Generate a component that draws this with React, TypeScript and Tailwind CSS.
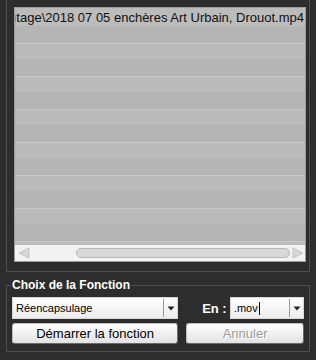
import React from 'react';

const rows = Array.from({ length: 14 });

function Combo({ value, width, caret }: { value: string; width: string; caret?: boolean }) {
  return (
    <div className={`${width} h-[22px] flex items-center bg-gradient-to-b from-white to-[#ececec] border border-[#d8d8d8]`}>
      <div className="flex-1 flex items-center pl-[3px] text-[11px] text-black leading-none">
        {value}
        {caret && <span className="inline-block w-px h-[13px] bg-black ml-[1px]" />}
      </div>
      <div className="h-[18px] border-l border-[#9a9a9a]" />
      <div className="w-[13px] flex justify-center">
        <svg width="8" height="5" viewBox="0 0 8 5">
          <path d="M0.5 0.5 L7.5 0.5 L4 4.5 Z" fill="#222" />
        </svg>
      </div>
    </div>
  );
}

export default function App() {
  return (
    <div className="w-[316px] h-[360px] bg-[#2d2d2d] overflow-hidden" style={{ fontFamily: '"Liberation Sans", Arial, sans-serif' }}>
      {/* Upper group : file list */}
      <div className="ml-[6px] w-[304px] h-[272px] border border-t-0 border-[#4e4e4e] pl-[7px] pt-[7px]">
        <div className="w-[292px] h-[255px] border border-[#9c9c9c] bg-[#bababa] flex flex-col overflow-hidden">
          <div className="h-[18px] bg-[#bcbcbc] flex items-center justify-end pr-[1px] overflow-hidden whitespace-nowrap text-[13px] text-[#111] leading-none">
            <span className="shrink-0">ıtage\2018 07 05 enchères Art Urbain, Drouot.mp4</span>
          </div>
          <div className="flex-1 flex flex-col overflow-hidden">
            {rows.map((_, i) => (
              <div
                key={i}
                className={
                  i % 2 === 0
                    ? 'h-[16.5px] shrink-0 bg-[#b5b5b5]'
                    : 'h-[16.5px] shrink-0 bg-[#bbbbbb] border-t border-[#c8c8c8]'
                }
              />
            ))}
          </div>
          {/* horizontal scrollbar */}
          <div className="h-[16px] shrink-0 bg-[#f2f2f2] flex items-center">
            <svg width="14" height="12" viewBox="0 0 14 12" className="ml-[2px]">
              <path d="M2 6 L12 1 L12 11 Z" fill="#d6d6d6" stroke="#c4c4c4" />
            </svg>
            <div className="ml-[45px] w-[214px] h-[10px] rounded-[5px] bg-[#d8d8d8] border border-[#b8b8b8]" />
            <svg width="14" height="12" viewBox="0 0 14 12" className="ml-[1px]">
              <path d="M12 6 L2 1 L2 11 Z" fill="#d6d6d6" stroke="#c4c4c4" />
            </svg>
          </div>
        </div>
      </div>

      {/* Lower group : function choice */}
      <div className="ml-[6px] mt-[13px] w-[304px] h-[67px] border border-[#4e4e4e] relative px-[5px] pt-[11px]">
        <div className="absolute left-[4px] top-[-9px] px-[1px] bg-[#2d2d2d] text-white font-bold text-[12px] leading-[16px]">
          Choix de la Fonction
        </div>
        <div className="flex items-center">
          <Combo value="Réencapsulage" width="w-[168px]" />
          <span className="ml-[24px] w-[28px] text-white font-bold text-[13px] leading-none">En :</span>
          <Combo value=".mov" width="w-[75px]" caret />
        </div>
        <div className="flex mt-[4px] gap-[8px]">
          <button className="w-[168px] h-[21px] rounded-[3px] border border-[#bdbdbd] border-b-[#6a6a6a] border-r-[#6a6a6a] bg-gradient-to-b from-white to-[#e2e2e2] text-[13px] text-black leading-none">
            Démarrer la fonction
          </button>
          <button className="w-[119px] h-[21px] rounded-[3px] border border-[#bdbdbd] border-b-[#6a6a6a] border-r-[#6a6a6a] bg-gradient-to-b from-white to-[#e2e2e2] text-[13px] text-[#9c9c9c] leading-none [text-shadow:1px_1px_0_#ffffff]">
            Annuler
          </button>
        </div>
      </div>
    </div>
  );
}
